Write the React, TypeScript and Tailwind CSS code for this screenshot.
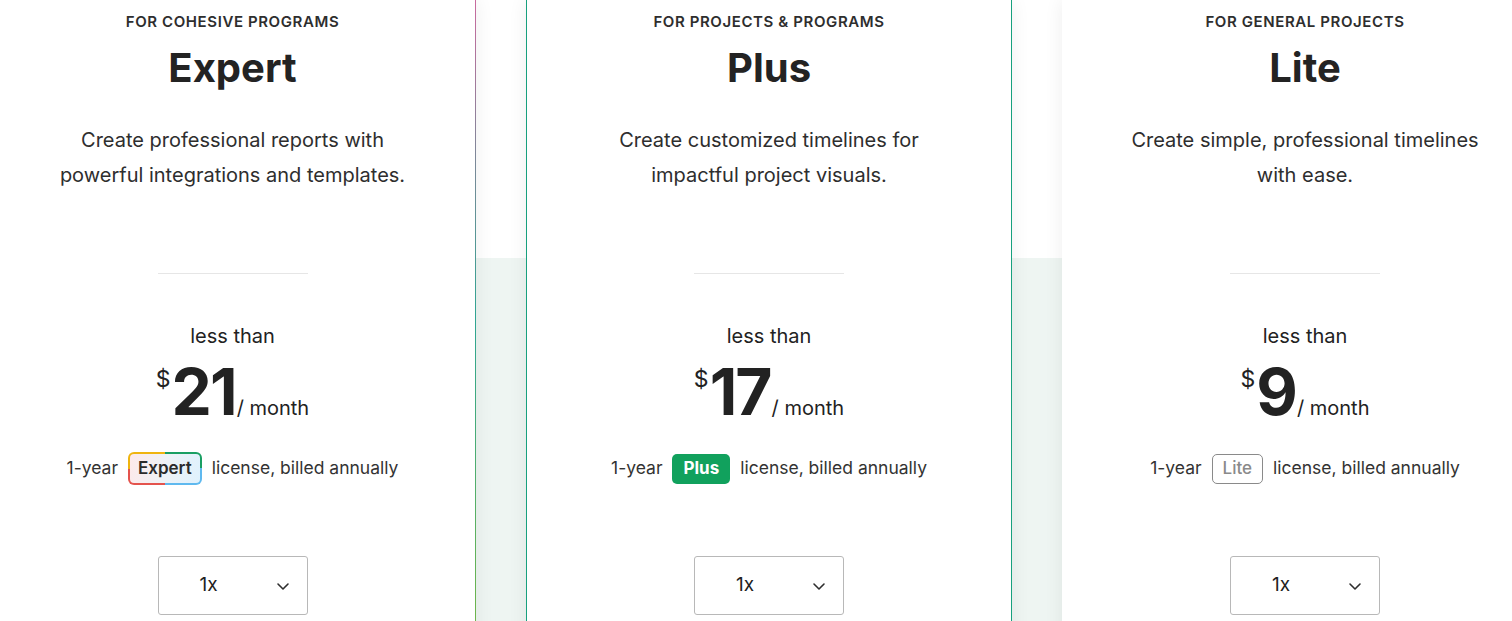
import React from "react";

type Plan = {
  key: string;
  eyebrow: string;
  name: string;
  lines: string[];
  price: string;
};

const plans: Plan[] = [
  {
    key: "expert",
    eyebrow: "For cohesive programs",
    name: "Expert",
    lines: ["Create professional reports with", "powerful integrations and templates."],
    price: "21",
  },
  {
    key: "plus",
    eyebrow: "For projects & programs",
    name: "Plus",
    lines: ["Create customized timelines for", "impactful project visuals."],
    price: "17",
  },
  {
    key: "lite",
    eyebrow: "For general projects",
    name: "Lite",
    lines: ["Create simple, professional timelines", "with ease."],
    price: "9",
  },
];

const Badge = ({ plan }: { plan: string }) => {
  if (plan === "expert") {
    return (
      <span className="inline-flex rounded-[6px] p-[2px] bg-[image:conic-gradient(#1a9f63_0_25%,#5fb9ef_0_50%,#e4534d_0_75%,#efb40f_0)]">
        <span className="rounded-[4px] bg-[linear-gradient(100deg,#fde9ea,#eef2f6_50%,#dff1fd)] px-[8px] h-[29px] flex items-center text-[17px] font-semibold text-[#2b2b2b]">
          Expert
        </span>
      </span>
    );
  }
  if (plan === "plus") {
    return (
      <span className="inline-flex items-center h-[30px] px-[11px] rounded-[5px] bg-[#11a15d] text-white text-[17px] font-bold">
        Plus
      </span>
    );
  }
  return (
    <span className="inline-flex items-center h-[30px] px-[10px] rounded-[5px] border border-[#8a8a8a] text-[#8a8a8a] text-[17px] font-medium">
      Lite
    </span>
  );
};

const CardBody = ({ plan }: { plan: Plan }) => (
  <div className="flex flex-col items-center text-center pt-[12px] h-[640px] bg-white text-[#262626]">
    <div className="text-[15px] leading-[20px] font-semibold uppercase tracking-[0.04em] text-[#2e2e2e]">
      {plan.eyebrow}
    </div>
    <h2 className="mt-[12px] text-[40px] leading-[48px] font-bold text-[#232323]">{plan.name}</h2>
    <p className="mt-[31px] text-[20px] leading-[35px] text-[#2e2e2e]">
      {plan.lines[0]}
      <br />
      {plan.lines[1]}
    </p>
    <div className="mt-[80px] w-[150px] h-px bg-[#e6e6e6]" />
    <div className="mt-[48px] text-[20px] leading-[28px] text-[#222]">less than</div>
    <div className="mt-[10px] flex items-baseline leading-none text-[#222]">
      <span className="self-start mt-[8px] text-[23px] mr-[1px]">$</span>
      <span className="text-[64px] font-bold tracking-[-0.03em]">{plan.price}</span>
      <span className="text-[20px] ml-[1px]">/ month</span>
    </div>
    <div className="mt-[28px] flex items-center gap-[10px] text-[17.5px] text-[#333] h-[33px]">
      <span>1-year</span>
      <Badge plan={plan.key} />
      <span>license, billed annually</span>
    </div>
    <div className="mt-[71px] w-[150px] h-[59px] border border-[#b8b8b8] rounded-[3px] flex items-center justify-between pl-[41px] pr-[16px]">
      <span className="text-[19px] text-[#222]">1x</span>
      <svg width="16" height="16" viewBox="0 0 16 16" fill="none">
        <path d="M3 6l5 5 5-5" stroke="#2e2e2e" strokeWidth="1.6" strokeLinecap="round" strokeLinejoin="round" />
      </svg>
    </div>
  </div>
);

export default function App() {
  return (
    <div
      className="w-[1512px] h-[621px] overflow-hidden bg-[linear-gradient(to_bottom,#ffffff_258px,#eef5f2_258px)]"
      style={{ fontFamily: "Inter, 'Noto Sans', sans-serif" }}
    >
      <div className="flex gap-[50px] ml-[-10px]">
        {/* Expert: gradient edge on the right */}
        <div className="w-[486px] shrink-0 pr-px bg-[linear-gradient(to_bottom,#c96a9e,#2fa592_50%,#72b646)] shadow-[0_0_18px_rgba(0,0,0,0.07)]">
          <CardBody plan={plans[0]} />
        </div>
        {/* Plus: green outline */}
        <div className="w-[486px] shrink-0 border-x border-[#17a07e] shadow-[0_0_18px_rgba(0,0,0,0.07)]">
          <CardBody plan={plans[1]} />
        </div>
        <div className="w-[486px] shrink-0 shadow-[0_0_18px_rgba(0,0,0,0.07)]">
          <CardBody plan={plans[2]} />
        </div>
      </div>
    </div>
  );
}
